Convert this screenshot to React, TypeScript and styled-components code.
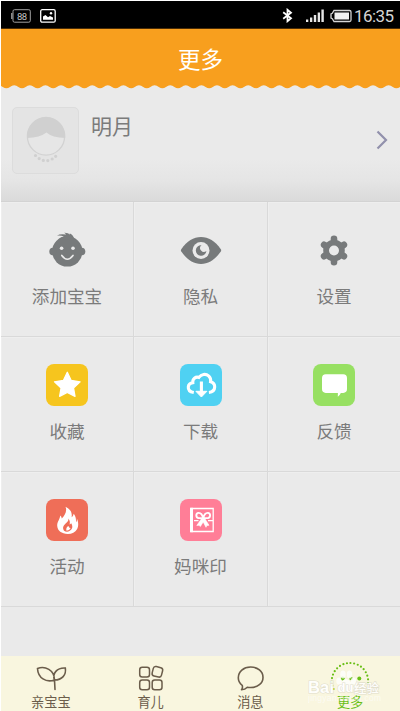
import React from "react";
import styled, { createGlobalStyle } from "styled-components";

const Global = createGlobalStyle`
  * { box-sizing: border-box; }
  body { margin: 0; background: #fff; overflow: hidden; }
  svg { display: block; flex: none; }
`;

const Screen = styled.div`
  width: 400px;
  height: 711px;
  padding: 1px 0 0 1px;
  display: flex;
  flex-direction: column;
  background: #fff;
  font-family: "Noto Sans CJK SC", sans-serif;
  color: #7b7b7b;
`;

const StatusBar = styled.header`
  height: 28px;
  flex: none;
  background: #000;
  border-bottom: 1px solid #4a2c05;
  display: flex;
  align-items: center;
  padding: 2px 6px 0 10px;
`;

const Gap = styled.span<{ $w: number }>`
  width: ${(p) => p.$w}px;
  flex: none;
`;

const Spacer = styled.span`
  flex: 1;
`;

const Clock = styled.span`
  font: 17px/20px Roboto, sans-serif;
  letter-spacing: -0.6px;
  color: #d6d6d6;
  width: 40px;
  white-space: nowrap;
`;

const TitleBar = styled.div`
  height: 55px;
  flex: none;
  background: #f89f1e;
  color: #fff;
  font-size: 22.5px;
  line-height: 58px;
  text-align: center;
`;

const Content = styled.main`
  flex: none;
  height: 572px;
  background: #eaeaea;
  display: flex;
  flex-direction: column;
`;

const Profile = styled.section`
  height: 112px;
  flex: none;
  display: flex;
  padding: 18px 12px 0 11px;
  background: linear-gradient(#eaeaea 62%, #e5e5e5 82%, #dadada);
`;

const Avatar = styled.div`
  width: 67px;
  height: 67px;
  border: 1px solid #dcdcdc;
  border-radius: 5px;
  background: #e4e4e4;
`;

const Name = styled.h1`
  margin: 3px 0 0 12px;
  font-size: 21px;
  line-height: 30px;
  font-weight: 400;
  flex: 1;
`;

const Chevron = styled.div`
  padding-top: 23px;
`;

const Grid = styled.section`
  display: grid;
  grid-template-columns: 133px 134px 132px;
  grid-auto-rows: 135px;
  border-top: 1px solid #d3d3d3;
`;

const Cell = styled.div<{ $last?: boolean }>`
  border-bottom: 1px solid #d9d9d9;
  border-right: ${(p) => (p.$last ? "0" : "1px solid #d9d9d9")};
  box-shadow: inset 1px 1px 0 #eeeeee;
  display: flex;
  flex-direction: column;
  align-items: center;
  padding-top: 27px;
`;

const Tile = styled.div<{ $color?: string }>`
  width: 42px;
  height: 42px;
  border-radius: 8px;
  background: ${(p) => p.$color ?? "transparent"};
`;

const Label = styled.span`
  margin-top: 12px;
  font-size: 17.6px;
  line-height: 26px;
`;

const TabBar = styled.nav`
  height: 55px;
  flex: none;
  background: #f9f6df;
  display: grid;
  grid-template-columns: repeat(4, 1fr);
  position: relative;
`;

const Tab = styled.div<{ $active?: boolean }>`
  display: flex;
  flex-direction: column;
  align-items: center;
  padding-top: 3px;
  font-size: 13.2px;
  line-height: 18px;
  font-weight: 400;
  color: ${(p) => (p.$active ? "#6abf17" : "#6b5d4b")};
`;

const Watermark = styled.div`
  position: absolute;
  left: 307px;
  top: 10px;
  width: 76px;
  height: 42px;
`;

const SCALLOP = 15.6;
const scallopPath = (() => {
  let d = "M-2.4 0V1.2";
  for (let i = 0; i < 26; i++) {
    d += `q2.2 .3 4.2 1.8q3.6 2.4 7.2 0q2 -1.5 4.2 -1.8`;
  }
  return d + `V0Z`;
})();

const Scallops = () => (
  <svg width="399" height="5" viewBox="0 0 399 5" fill="#f89f1e">
    <path d={scallopPath} />
    <path d={`M${-2.4 + SCALLOP * 25} 0H399V2.5h-3z`} />
  </svg>
);

const BabyIcon = () => (
  <svg width="42" height="42" viewBox="0 0 42 42" fill="#777a7b">
    <circle cx="21.3" cy="22.4" r="15.2" />
    <ellipse cx="6.8" cy="22.5" rx="3.5" ry="3.8" />
    <ellipse cx="35.8" cy="22.5" rx="3.5" ry="3.8" />
    <path d="M12 11C14 8.5 16 8 18 7.8Q15 6.2 11 6.7Q14 4.5 20 5.6Q19.5 4.5 18.2 3.8Q22 3.6 24 5.6Q24.2 4.9 23.5 4.2Q27.5 6 28 9.5z" />
    <g fill="#eaeaea">
      <circle cx="15.6" cy="19.2" r="1.8" />
      <circle cx="27" cy="19.2" r="1.8" />
    </g>
    <path d="M15.8 26.5Q21.3 34 27 26.5" fill="none" stroke="#eaeaea" strokeWidth="1.7" strokeLinecap="round" />
  </svg>
);

const EyeIcon = () => (
  <svg width="42" height="42" viewBox="0 0 42 42" fill="#777a7b">
    <path d="M1.3 20.2C7 12 13.5 8 21 8s14 4 19.8 12.2q.8 1.2 0 2.4C35 30.8 28.5 35 21 35S7 30.8 1.3 22.6q-.8-1.2 0-2.4z" />
    <circle cx="21" cy="21.5" r="8.5" fill="#eaeaea" />
    <path d="M21.5 16.2a5.3 5.3 0 1 0 4.9 5.8a3.2 3.2 0 1 1-4.900-5.800z" />
  </svg>
);

const GearIcon = () => (
  <svg width="42" height="42" viewBox="0 0 42 42">
    <g fill="none" stroke="#777a7b" strokeWidth="6.6" strokeLinecap="round">
      <path d="M21 9.800v3M21 30.200v3M11.100 15.800l2.500 1.500M30.900 15.800l-2.500 1.500M11.100 27.200l2.500-1.500M30.900 27.200l-2.500-1.500" />
    </g>
    <circle cx="21" cy="21.5" r="7.9" fill="none" stroke="#777a7b" strokeWidth="5.8" />
  </svg>
);

const StarIcon = () => (
  <svg width="42" height="42" viewBox="0 0 42 42">
    <path d="M21.300 8.300l3.900 8.200 8.900 1.300-6.600 6.100 1.500 8.400-7.700-3.800-7.700 3.800 1.500-8.400-6.600-6.100 8.900-1.300z" fill="#fff" stroke="#fff" strokeWidth="1.3" strokeLinejoin="round" />
  </svg>
);

const CloudIcon = () => (
  <svg width="42" height="42" viewBox="0 0 42 42" fill="none" stroke="#fff" strokeWidth="3.1">
    <path d="M13.800 28.500C9.700 27.700 8 25.800 8.300 22.800c.2-2.300 2-3.800 4.500-4.100c-.4-4 2.700-6.200 6.100-5.300c2.400-3.300 6.800-4.100 9.700-1.500c1.800 1.600 2.400 3.500 2 5.800c2.600.8 4.200 2.600 4.100 5.200c-.1 3.300-2 5.200-5.800 5.600" />
    <path d="M21.400 17.500v11" />
    <path d="M15.900 27.300h11L21.400 33z" fill="#fff" stroke="#fff" strokeWidth="1" strokeLinejoin="round" />
  </svg>
);

const ChatIcon = () => (
  <svg width="42" height="42" viewBox="0 0 42 42" fill="#fff">
    <path d="M12.800 10.300h17.400q3.800 0 3.800 3.800v11q0 3.800-3.800 3.800h-2.400q-.8 2-3 3.900l.1-3.900H12.800Q9 28.900 9 25.100V14.100q0-3.800 3.800-3.800z" />
  </svg>
);

const FireIcon = () => (
  <svg width="42" height="42" viewBox="0 0 42 42" fill="#fff">
    <path d="M19.500 7.800C24 10 26.500 13 25.600 18.200Q27.300 17.500 27.700 14.800C30.500 18.300 29.600 20.500 30.500 23.300C31 21.800 31 20.500 30.700 19.300C32.800 23.200 32.500 27.500 31 30.200C29.300 33.400 26 34.900 21.800 34.900C15.500 34.900 11.500 31.800 11.200 26.800C11 22.500 14 20.500 14.200 16.500Q15.600 17.500 15.800 19.500C18.600 16.500 21.500 12 19.500 7.800z" />
    <path d="M18 31.800C15.600 27.500 18.500 25.800 20.700 23.500C22.300 22.100 22.500 21 22.400 19.500C24.200 22 24 23.500 23.600 25.500Q24.500 25.300 25.200 24.200C27.800 28.400 25.500 31.300 22.300 32.500Q20 33 18 31.800z" fill="#ef6e58" />
    <path d="M20.500 31.800Q19.500 28.500 22.500 27Q22.800 29 24.600 29.200Q23.500 31.600 20.500 31.800z" fill="#fff" />
  </svg>
);

const GiftIcon = () => (
  <svg width="42" height="42" viewBox="0 0 42 42" fill="none" stroke="#fff" strokeWidth="1.3">
    <path d="M11 9.500h22.200v23H11z" />
    <path d="M10 8.800h3v24.400h-3z" fill="#fff" stroke="none" />
    <path d="M14 21.600h4.500M28 21.600h5" />
    <path d="M23.200 19.500C22.500 16 21.200 13.800 18.500 13.900C15.600 14.200 15.600 18.400 18.300 19C20 19.300 21.500 19 23.200 19.500C23.900 16 25.200 13.800 27.900 13.900C30.800 14.200 30.800 18.400 28.100 19C26.400 19.300 24.900 19 23.200 19.500z" strokeWidth="1.9" />
    <path d="M21.800 19.300h2.800l4.400 7-2.200.3-.8 1.700-2.800-5.400-2.800 4.600-1.400-1.200-2.200.2z" fill="#fff" strokeWidth=".6" />
  </svg>
);

const items = [
  { label: "添加宝宝", icon: <BabyIcon /> },
  { label: "隐私", icon: <EyeIcon /> },
  { label: "设置", icon: <GearIcon /> },
  { label: "收藏", icon: <StarIcon />, color: "#f6c51e" },
  { label: "下载", icon: <CloudIcon />, color: "#4fd1f2" },
  { label: "反馈", icon: <ChatIcon />, color: "#97e062" },
  { label: "活动", icon: <FireIcon />, color: "#ef6e58" },
  { label: "妈咪印", icon: <GiftIcon />, color: "#ff7e97" },
  { label: "" },
];

const LeafIcon = () => (
  <svg width="40" height="34" viewBox="0 0 40 34" fill="none" stroke="#6b5d4b" strokeWidth="1.6" strokeLinecap="round">
    <path d="M24 30.500L23.500 21C15 24 7 19 6.500 9.500C14 6.500 23.500 11 23.500 21C21 14.500 26 8.500 34.300 9C35.500 16 31 21 23.500 21" />
  </svg>
);

const BlocksIcon = () => (
  <svg width="40" height="34" viewBox="0 0 40 34" fill="none" stroke="#6b5d4b" strokeWidth="1.5">
    <rect x="8.7" y="8.3" width="9.8" height="9.8" rx="2.5" />
    <rect x="8.7" y="21" width="9.8" height="9.8" rx="2.5" />
    <rect x="21.2" y="21" width="9.8" height="9.8" rx="2.5" />
    <rect x="21.6" y="8" width="9.6" height="9.6" rx="2.5" transform="rotate(14 26.4 12.8)" />
  </svg>
);

const BubbleIcon = () => (
  <svg width="40" height="34" viewBox="0 0 40 34" fill="none" stroke="#6b5d4b" strokeWidth="1.6" strokeLinejoin="round">
    <path d="M12.200 26.300C9.700 24.500 8.300 21.800 8.300 18.800C8.300 12.500 13.600 8 20.600 8S33 12.500 33 18.400S27.500 28.500 20.600 28.500Q18.800 28.500 17.300 28.200Q15 30.500 11.500 30.800Q13 28.700 12.200 26.300z" />
  </svg>
);

const MoreIcon = () => (
  <svg width="40" height="34" viewBox="0 0 40 34">
    <path d="M3.500 30A18.200 18.200 0 1 1 37.500 27" fill="none" stroke="#6abf17" strokeWidth="2.2" strokeLinecap="round" strokeDasharray="0 3.7" />
    <circle cx="12.7" cy="19.5" r="2" fill="#6abf17" />
    <circle cx="21" cy="19.5" r="1.8" fill="#6abf17" />
    <circle cx="29.3" cy="19.5" r="2" fill="#6abf17" />
  </svg>
);

const tabs = [
  { label: "亲宝宝", icon: <LeafIcon /> },
  { label: "育儿", icon: <BlocksIcon /> },
  { label: "消息", icon: <BubbleIcon /> },
  { label: "更多", icon: <MoreIcon />, active: true },
];

export default function App() {
  return (
    <Screen>
      <Global />
      <StatusBar>
        <svg width="20" height="14" viewBox="0 0 20 14" fill="none" stroke="#a2a2a2">
          <rect x="2" y=".7" width="17.3" height="12.5" rx="1.5" />
          <path d="M.8 4v6" strokeWidth="1.3" />
          <text x="6" y="10.6" fill="#c4c4c4" stroke="none" fontFamily="Roboto" fontSize="9.5" textLength="10">88</text>
        </svg>
        <Gap $w={9} />
        <svg width="16" height="14" viewBox="0 0 16 14" fill="none" stroke="#fff" strokeWidth="1.3">
          <rect x=".7" y=".7" width="14.5" height="12.5" rx="1.5" />
          <path d="M3 10.800V7.500l2.500-1.500L8 8.200l2-1.200 3 1.500v2.300z" fill="#fff" stroke="none" />
          <circle cx="11" cy="4.3" r="1.2" fill="#fff" stroke="none" />
        </svg>
        <Spacer />
        <svg width="11" height="15" viewBox="0 0 11 15" fill="none" stroke="#fff" strokeWidth="1.8">
          <path d="M1.200 4.300L9 10.200L5.500 13.200V1.800L9 4.800L1.200 10.700" />
        </svg>
        <Gap $w={13} />
        <svg width="18" height="15" viewBox="0 0 18 15" fill="#e6e6e6">
          <path d="M0 11.500h2.300V14H0zM4 9.500h2.300V14H4zM7.800 7h2.400v7H7.800zM11.700 4.500H14V14h-2.300zM15.400 1.500h2.400V14h-2.400z" />
        </svg>
        <Gap $w={6} />
        <svg width="22" height="14" viewBox="0 0 22 14">
          <path d="M4 1.500h15.500q1.500 0 1.500 1.500v8q0 1.500-1.500 1.500H4L2.300 9.700 1 9V5l1.300-.7z" fill="none" stroke="#d6d6d6" strokeWidth="1.3" />
          <rect x="4.5" y="3.5" width="14.5" height="7" fill="#f0f0f0" />
        </svg>
        <Gap $w={2} />
        <Clock>16:35</Clock>
      </StatusBar>
      <TitleBar>更多</TitleBar>
      <Content>
        <Scallops />
        <Profile>
          <Avatar>
            <svg width="65" height="65" viewBox="0 0 65 65">
              <circle cx="33" cy="28.5" r="18.6" fill="#e6e6e6" stroke="#d2d2d2" strokeWidth="1.3" />
              <path d="M14 30A19.200 19.200 0 1 1 52.200 30Q39 29.500 33.500 24.500Q27 29.500 14 30z" fill="#d0d0d0" />
              <path d="M22.500 47.500Q33.500 58.500 44.500 46.500" fill="none" stroke="#d0d0d0" strokeWidth="3.2" strokeLinecap="round" strokeDasharray="0 4.6" />
            </svg>
          </Avatar>
          <Name>明月</Name>
          <Chevron>
            <svg width="12" height="20" viewBox="0 0 12 20" fill="none" stroke="#9291ac" strokeWidth="2.2">
              <path d="M1.500 1.500L10 10l-8.500 8.500" />
            </svg>
          </Chevron>
        </Profile>
        <Grid>
          {items.map((item, i) => (
            <Cell key={i} $last={i % 3 === 2}>
              {item.icon && (
                <>
                  <Tile $color={item.color}>{item.icon}</Tile>
                  <Label>{item.label}</Label>
                </>
              )}
            </Cell>
          ))}
        </Grid>
      </Content>
      <TabBar>
        {tabs.map((tab) => (
          <Tab key={tab.label} $active={tab.active}>
            {tab.icon}
            {tab.label}
          </Tab>
        ))}
        <Watermark>
          <svg width="76" height="42" viewBox="0 0 76 42" fill="#fff">
            <g opacity=".8">
              <ellipse cx="31" cy="15" rx="2.7" ry="3.6" />
              <ellipse cx="35" cy="8.5" rx="2.7" ry="4" />
              <ellipse cx="41.5" cy="8.5" rx="2.7" ry="4" />
              <ellipse cx="45.5" cy="15" rx="2.7" ry="3.6" />
              <path d="M38 13q3 0 5.500 4.500 4 3.500 1.500 7-2 1.500-7 1-5 .5-7-1-2.500-3.500 1.500-7Q35 13 38 13z" />
            </g>
            <g stroke="#dfdccb" strokeWidth="1.2" opacity=".9" paintOrder="stroke" fontFamily="Liberation Sans">
              <text x="0" y="27" fontWeight="700" fontSize="16.5" textLength="26">Bai</text>
              <text x="29.5" y="26" fontWeight="700" fontSize="13" textLength="16">du</text>
              <text x="46" y="26.5" fontFamily="Noto Sans CJK SC" fontWeight="500" fontSize="12.5" textLength="25">经验</text>
            </g>
            <text x="0" y="35" fontFamily="Liberation Sans" fontSize="8.5" textLength="73" opacity=".6">jingyan.baidu.com</text>
          </svg>
        </Watermark>
      </TabBar>
    </Screen>
  );
}
